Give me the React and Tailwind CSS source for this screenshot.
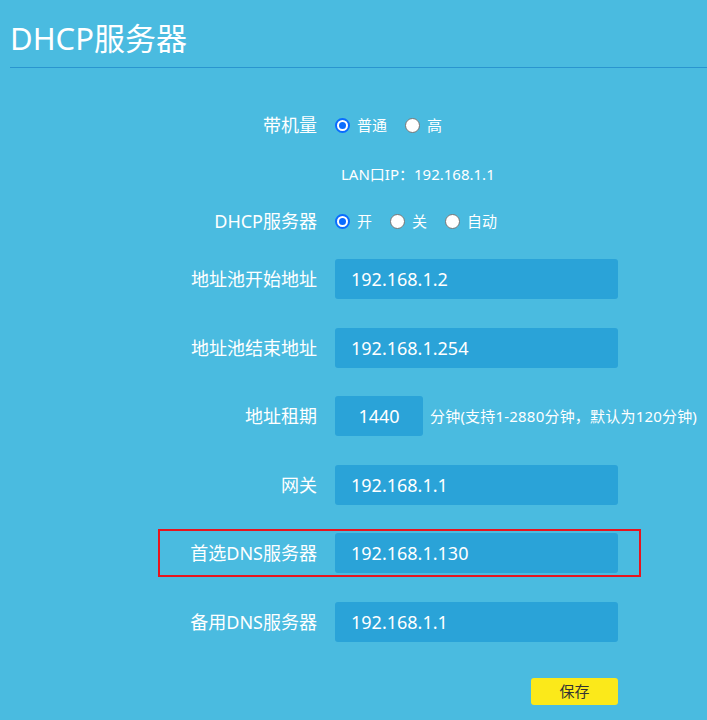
import { useState } from 'react';

const font = { fontFamily: '"Noto Sans", "Noto Sans CJK SC", sans-serif' };

const Radio = ({ checked, label, onClick }) => (
  <label className="flex items-center mr-[18px] cursor-pointer" onClick={onClick}>
    <span
      className={
        'w-[15px] h-[15px] rounded-full bg-white flex items-center justify-center ' +
        (checked ? 'border-[2px] border-[#0a6cff]' : 'border border-[#767676]')
      }
    >
      {checked && <span className="w-[7px] h-[7px] rounded-full bg-[#0a6cff]" />}
    </span>
    <span className="ml-[7px] text-[15px] text-white">{label}</span>
  </label>
);

const Row = ({ label, children, className = '' }) => (
  <div className={'flex items-center ' + className}>
    <div className="w-[317px] text-right text-[18px] text-white whitespace-nowrap">{label}</div>
    <div className="ml-[18px] flex items-center">{children}</div>
  </div>
);

const Field = ({ value, narrow }) => (
  <div
    className={
      'h-[40px] rounded-[3px] bg-[#2aa3d8] text-white text-[18px] flex items-center ' +
      (narrow ? 'w-[88px] justify-center' : 'w-[283px] pl-[16px]')
    }
  >
    {value}
  </div>
);

export default function App() {
  const [bandwidth, setBandwidth] = useState('normal');
  const [dhcp, setDhcp] = useState('on');

  return (
    <div className="w-[707px] h-[720px] bg-[#4abbe0] overflow-hidden" style={font}>
      {/* Header */}
      <div className="ml-[10px] h-[68px] pt-[18px] border-b border-[#2a95cf]">
        <h1 className="text-[31px] leading-[40px] text-white">DHCP服务器</h1>
      </div>

      {/* Form */}
      <Row label="带机量" className="mt-[43px] h-[28px]">
        <Radio checked={bandwidth === 'normal'} label="普通" onClick={() => setBandwidth('normal')} />
        <Radio checked={bandwidth === 'high'} label="高" onClick={() => setBandwidth('high')} />
      </Row>

      <div className="mt-[21px] h-[28px] flex items-center pl-[341px] text-[15px] text-white">
        LAN口IP：192.168.1.1
      </div>

      <Row label="DHCP服务器" className="mt-[19px] h-[28px]">
        <Radio checked={dhcp === 'on'} label="开" onClick={() => setDhcp('on')} />
        <Radio checked={dhcp === 'off'} label="关" onClick={() => setDhcp('off')} />
        <Radio checked={dhcp === 'auto'} label="自动" onClick={() => setDhcp('auto')} />
      </Row>

      <Row label="地址池开始地址" className="mt-[24px]">
        <Field value="192.168.1.2" />
      </Row>

      <Row label="地址池结束地址" className="mt-[29px]">
        <Field value="192.168.1.254" />
      </Row>

      <Row label="地址租期" className="mt-[28px]">
        <Field value="1440" narrow />
        <span className="ml-[7px] text-[15px] tracking-[0.2px] text-white whitespace-nowrap">
          分钟(支持1-2880分钟，默认为120分钟)
        </span>
      </Row>

      <Row label="网关" className="mt-[29px]">
        <Field value="192.168.1.1" />
      </Row>

      {/* highlighted row */}
      <div className="relative mt-[28px]">
        <Row label="首选DNS服务器">
          <Field value="192.168.1.130" />
        </Row>
        <span className="absolute left-[158px] top-[-4px] w-[483px] h-[48px] border-2 border-[#e8141e] pointer-events-none" />
      </div>

      <Row label="备用DNS服务器" className="mt-[29px]">
        <Field value="192.168.1.1" />
      </Row>

      <div className="mt-[36px] flex">
        <button className="ml-[531px] w-[87px] h-[27px] rounded-[3px] bg-[#fbe91a] text-[15px] text-[#333]">
          保存
        </button>
      </div>
    </div>
  );
}
